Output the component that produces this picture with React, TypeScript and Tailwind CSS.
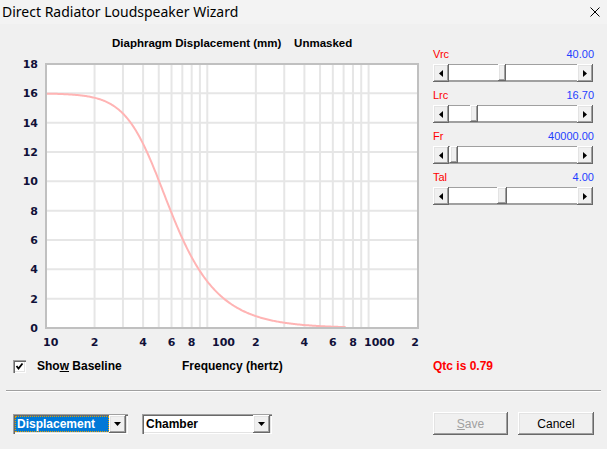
import React from "react";

type SliderProps = {
	label: string;
	value: string;
	offset: string;
	thumb: string;
};

const raised =
	"shadow-[inset_-1px_-1px_#696969,inset_1px_1px_#ffffff,inset_-2px_-2px_#a0a0a0,inset_2px_2px_#e3e3e3]";
const sunken =
	"shadow-[inset_1px_1px_#a0a0a0,inset_2px_2px_#696969,inset_-1px_-1px_#ffffff,inset_-2px_-2px_#e3e3e3]";

// plot geometry, in page pixels
const LEFT = 46;
const RIGHT = 418;
const TOP = 64;
const BOTTOM = 328;
const DECADE = 161.3;
const PER_UNIT = (BOTTOM - TOP) / 18;

const fx = (f: number) => LEFT + DECADE * Math.log10(f / 10);
const vy = (v: number) => BOTTOM - v * PER_UNIT;

const gridFreqs = [
	20, 30, 40, 50, 60, 70, 80, 90, 100, 200, 300, 400, 500, 600, 700, 800, 900,
	1000,
];

// cone excursion, second order low pass around 45 Hz
const curve = (() => {
	const pts: string[] = [];
	for (let i = 0; i <= 300; i++) {
		const f = 10 * Math.pow(10, (i / 300) * Math.log10(72));
		const v = 16 / Math.sqrt(1 + (f / 45) ** 4);
		pts.push(`${fx(f).toFixed(2)},${vy(v).toFixed(2)}`);
	}
	return pts.join(" ");
})();

const xLabels: { text: string; x: number; anchor: "start" | "middle" }[] = [
	{ text: "10", x: 43, anchor: "start" },
	{ text: "2", x: fx(20), anchor: "middle" },
	{ text: "4", x: fx(40), anchor: "middle" },
	{ text: "6", x: fx(60), anchor: "middle" },
	{ text: "8", x: fx(80), anchor: "middle" },
	{ text: "100", x: 212, anchor: "start" },
	{ text: "2", x: fx(200), anchor: "middle" },
	{ text: "4", x: fx(400), anchor: "middle" },
	{ text: "6", x: fx(600), anchor: "middle" },
	{ text: "8", x: fx(800), anchor: "middle" },
	{ text: "1000", x: 364, anchor: "start" },
	{ text: "2", x: 415, anchor: "middle" },
];

const Chart = () => (
	<svg width={420} height={298} viewBox="0 54 420 298" className="block">
		<rect x={LEFT} y={TOP} width={RIGHT - LEFT} height={BOTTOM - TOP} fill="#ffffff" />
		{gridFreqs.map((f) => (
			<line key={f} x1={fx(f)} x2={fx(f)} y1={TOP} y2={BOTTOM} stroke="#e6e6e6" strokeWidth={2} />
		))}
		{[2, 4, 6, 8, 10, 12, 14, 16].map((v) => (
			<line key={v} x1={LEFT} x2={RIGHT} y1={vy(v)} y2={vy(v)} stroke="#e6e6e6" strokeWidth={2} />
		))}
		<polyline points={curve} fill="none" stroke="#ffb4b4" strokeWidth={2} />
		<rect
			x={LEFT}
			y={TOP}
			width={RIGHT - LEFT}
			height={BOTTOM - TOP}
			fill="none"
			stroke="#c0c0c0"
			strokeWidth={2}
		/>
		<g fontFamily="DejaVu Sans, sans-serif" fontWeight="bold" fontSize={11} fill="#101038">
			{[0, 2, 4, 6, 8, 10, 12, 14, 16, 18].map((v) => (
				<text key={v} x={38} y={vy(v) + 4} textAnchor="end">
					{v}
				</text>
			))}
			{xLabels.map((l, i) => (
				<text key={i} x={l.x} y={345.5} textAnchor={l.anchor}>
					{l.text}
				</text>
			))}
		</g>
	</svg>
);

const Arrow = ({ dir }: { dir: "left" | "right" }) => (
	<div className={`w-[16px] h-full bg-[#f0f0f0] flex items-center justify-center ${raised}`}>
		<svg width={4} height={7} viewBox="0 0 4 7">
			<polygon points={dir === "left" ? "4,0 0,3.5 4,7" : "0,0 4,3.5 0,7"} fill="#000000" />
		</svg>
	</div>
);

const Slider = ({ label, value, offset, thumb }: SliderProps) => (
	<div className="flex flex-col">
		<div className="flex justify-between h-[14px] items-center text-[11px] leading-[14px]">
			<span className="text-[#ff0000]">{label}</span>
			<span className="text-[#1f3fff]">{value}</span>
		</div>
		<div className="mt-[3px] flex h-[18px] w-[160px]">
			<Arrow dir="left" />
			<div className="flex-1 flex bg-white border-t border-t-[#a0a0a0] border-b-2 border-b-[#a0a0a0]">
				<div className={`${offset} ${thumb} -my-px bg-[#f0f0f0] ${raised}`} />
			</div>
			<Arrow dir="right" />
		</div>
	</div>
);

const DownButton = () => (
	<div className={`w-[17px] h-[18px] bg-[#f0f0f0] flex items-center justify-center ${raised}`}>
		<svg width={7} height={4} viewBox="0 0 7 4">
			<polygon points="0,0 7,0 3.5,4" fill="#000000" />
		</svg>
	</div>
);

export default function App() {
	return (
		<div className="w-[607px] h-[449px] bg-[#f0f0f0] flex flex-col overflow-hidden font-['Liberation_Sans',Arial,sans-serif] text-black">
			<div className="h-[24px] shrink-0 bg-[#f3f3f3] flex items-center justify-between pl-[2px] pr-[7px]">
				<span className="font-['Noto_Sans',sans-serif] text-[14px] leading-[20px] text-black">
					Direct Radiator Loudspeaker Wizard
				</span>
				<svg width={10} height={10} viewBox="0 0 10 10">
					<path d="M0.5 0.5 L9.5 9.5 M9.5 0.5 L0.5 9.5" stroke="#000000" strokeWidth={1} />
				</svg>
			</div>

			<div className="flex h-[328px] shrink-0">
				<div className="w-[420px] flex flex-col">
					<div className="h-[30px] pt-[12px] pl-[112px] text-[11.5px] font-bold leading-[14px] whitespace-pre">
						{"Diaphragm Displacement (mm)    Unmasked"}
					</div>
					<Chart />
				</div>
				<div className="ml-[13px] w-[161px] pt-[23px] flex flex-col gap-[6px]">
					<Slider label="Vrc" value="40.00" offset="ml-[49px]" thumb="w-[8px]" />
					<Slider label="Lrc" value="16.70" offset="ml-[21px]" thumb="w-[8px]" />
					<Slider label="Fr" value="40000.00" offset="ml-[1px]" thumb="w-[8px]" />
					<Slider label="Tal" value="4.00" offset="ml-[48px]" thumb="w-[10px]" />
				</div>
			</div>

			<div className="mt-[4px] h-[20px] flex items-center text-[12px] font-bold leading-[14px]">
				<div className="w-[182px] pl-[13px] flex items-center">
					<div className={`w-[13px] h-[13px] bg-white flex items-center justify-center ${sunken}`}>
						<svg width={9} height={9} viewBox="0 0 9 9">
							<path d="M1.5 4 L3.5 6.5 L7.5 1.5" stroke="#000000" strokeWidth={1.8} fill="none" />
						</svg>
					</div>
					<span className="ml-[11px]">
						Sho<u>w</u> Baseline
					</span>
				</div>
				<div className="w-[251px]">Frequency (hertz)</div>
				<div className="text-[#ff0000]">Qtc is 0.79</div>
			</div>

			<div className="mt-[14px] mx-[6px] border-t border-t-[#a0a0a0] border-b border-b-white" />

			<div className="mt-[20px] h-[23px] flex items-center px-[13px] text-[12px]">
				<div className={`w-[115px] h-[20px] bg-white flex items-center p-[2px] ${sunken}`}>
					<div className="flex-1 h-full bg-[#0078d7] border border-dotted border-[#e0a000] text-white font-bold leading-[14px] pl-[1px] flex items-center">
						Displacement
					</div>
					<DownButton />
				</div>
				<div className={`ml-[14px] w-[130px] h-[20px] bg-white flex items-center p-[2px] ${sunken}`}>
					<div className="flex-1 h-full font-bold leading-[14px] pl-[2px] flex items-center">Chamber</div>
					<DownButton />
				</div>
				<button className={`ml-auto w-[75px] h-[23px] bg-[#f0f0f0] text-[#a0a0a0] ${raised}`}>
					<u>S</u>ave
				</button>
				<button className={`ml-[10px] w-[76px] h-[23px] bg-[#f0f0f0] text-black ${raised}`}>
					Cancel
				</button>
			</div>
		</div>
	);
}
